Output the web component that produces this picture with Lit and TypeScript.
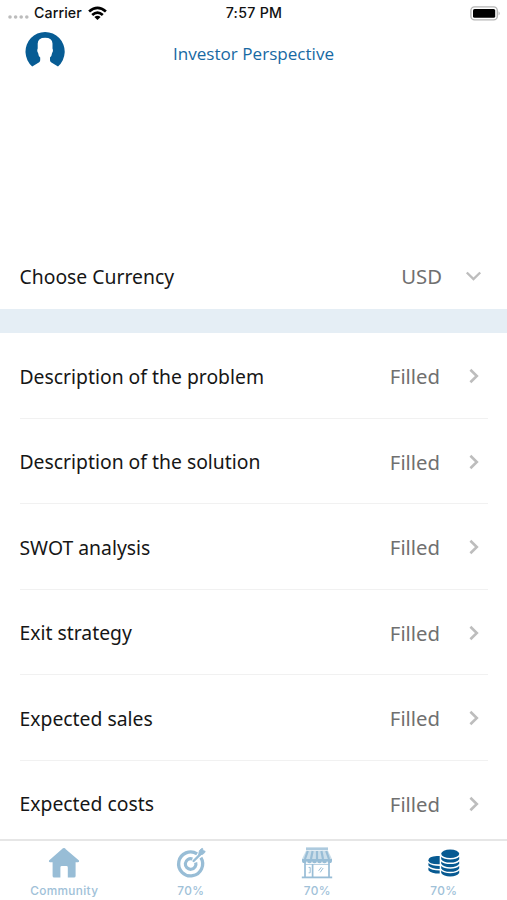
import { LitElement, html, css, svg } from "lit";
import { customElement } from "lit/decorators.js";

const ROWS = [
  "Description of the problem",
  "Description of the solution",
  "SWOT analysis",
  "Exit strategy",
  "Expected sales",
  "Expected costs",
];

const home = svg`<path d="M16 0.8 L31 13.6 Q31.6 15.2 30 15.2 H27.6 V29 Q27.6 30.6 26 30.6 H19.8 V20.4 Q19.8 19 18.4 19 H13.8 Q12.4 19 12.4 20.4 V30.6 H6.2 Q4.6 30.6 4.6 29 V15.2 H2 Q0.4 15.2 1 13.6 L13.8 2.2 Q16 0 18.2 2.2 Z" fill="currentColor"/>`;

const target = svg`<g fill="none" stroke="currentColor">
  <path d="M22.1 6.8 A12 12 0 1 0 25.9 10.7" stroke-width="3.3"/>
  <path d="M17.4 12 A5.3 5.3 0 1 0 20.7 15.4" stroke-width="3.2"/>
  <path d="M18.6 14 L26 6.6" stroke-width="2.4" stroke-linecap="round"/></g>
  <path d="M23.6 7.8 L24.4 3.6 Q27 0.8 27.6 1.4 L28 3.6 L30.2 4.2 Q30.4 5.6 27.6 7.4 Z" fill="currentColor" stroke="currentColor" stroke-width="0.8" stroke-linejoin="round"/>`;

const shop = svg`<g fill="none" stroke="currentColor">
  <rect x="5" y="0.4" width="22" height="2.8" fill="currentColor" stroke="none" opacity="0.8"/>
  <path d="M5 3.8 H27 L31 12 H1 Z" fill="currentColor" stroke="none" opacity="0.5"/>
  <path d="M6.8 4 L4 12 M11.6 4 L10 12 M16 4 V12 M20.4 4 L22 12 M25.2 4 L28 12" stroke-width="2.2"/>
  <path d="M1 12 H31 V13.4 A2.5 2.5 0 0 1 26 13.8 A2.5 2.5 0 0 1 21 13.8 A2.5 2.5 0 0 1 16 13.8 A2.5 2.5 0 0 1 11 13.8 A2.5 2.5 0 0 1 6 13.8 A2.5 2.5 0 0 1 1 13.4 Z" fill="currentColor" stroke="none"/>
  <path d="M4 15 V30 M28 15 V30 M11.6 17 V30" stroke-width="1.7"/>
  <path d="M4 17.4 H28" stroke-width="0.8"/>
  <path d="M0.8 30.4 H31.2" stroke-width="1.8"/>
  <path d="M7.6 20.4 H9.2 V25.8 H7.6 M17.6 23.8 L20.4 20.2 M19.2 25.4 L22.2 21" stroke-width="1"/></g>`;

const coins = svg`<g fill="currentColor">
  <ellipse cx="22.2" cy="6.8" rx="9" ry="4.3"/>
  <path d="M13.2 9.8 Q16 12.5 22.2 12.5 T31.2 9.8 V12.2 Q29 15.6 22.2 15.6 T13.2 12.2 Z"/>
  <path d="M13.2 14.4 Q16 17.1 22.2 17.1 T31.2 14.4 V16.8 Q29 20.2 22.2 20.2 T13.2 16.8 Z"/>
  <path d="M13.2 19 Q16 21.7 22.2 21.7 T31.2 19 V21.4 Q29 24.8 22.2 24.8 T13.2 21.4 Z"/>
  <path d="M13.2 23.6 Q16 26.3 22.2 26.3 T31.2 23.6 V26 Q29 29.4 22.2 29.4 T13.2 26 Z"/>
  <path d="M11.7 8.9 V17.3 Q0.4 17.6 0.4 13.2 Q0.6 9.2 8.8 8.9 Z"/>
  <path d="M0.4 16 Q3.4 18.9 11.7 18.9 V22 Q3 22 0.4 18.6 Z"/>
  <path d="M0.4 20.6 Q3.4 23.5 11.7 23.5 V26.6 Q3 26.6 0.4 23.2 Z"/></g>`;

const TABS = [
  { label: "Community", icon: home, active: false },
  { label: "70%", icon: target, active: false },
  { label: "70%", icon: shop, active: false },
  { label: "70%", icon: coins, active: true },
];

@customElement("app-root")
export class AppRoot extends LitElement {
  static styles = css`
    :host {
      display: flex;
      flex-direction: column;
      width: 507px;
      height: 900px;
      overflow: hidden;
      background: #fff;
      font-family: "Noto Sans", sans-serif;
      color: #161616;
    }
    svg { display: block; flex: none; }
    .status {
      display: grid;
      grid-template-columns: 1fr auto 1fr;
      align-items: center;
      height: 26px;
      padding: 0 7px 0 8px;
      font: 500 14.2px/26px Inter, sans-serif;
      color: #111;
      flex: none;
    }
    .carrier { display: flex; align-items: center; }
    .name { margin: 0 6px 0 5px; letter-spacing: 0.1px; }
    .time { letter-spacing: 0.3px; }
    .battery { justify-self: end; }
    .header {
      display: grid;
      grid-template-columns: 1fr auto 1fr;
      height: 224px;
      padding: 5px 25px 0;
      box-sizing: border-box;
      flex: none;
    }
    .title {
      font: 400 17.1px/24px "Open Sans", sans-serif;
      margin: 11px 0 0;
      color: #1769a3;
    }
    .row {
      display: flex;
      align-items: center;
      box-sizing: border-box;
      height: 85.5px;
      margin: 0 19px 0 19.5px;
      padding: 2px 7px 0 0;
      border-bottom: 1px solid #f1f1f1;
      font-size: 19.35px;
      flex: none;
    }
    .currency { height: 59px; border: 0; padding: 0 6px 7px 0; }
    .label { flex: 1; white-space: nowrap; }
    .value { color: #707070; font-size: 20.3px; margin-right: 27px; }
    .currency .value { margin-right: 23px; }
    .band { height: 24px; background: #e5eef5; flex: none; }
    .list { flex: 1; min-height: 0; overflow: hidden; }
    .tabs {
      display: grid;
      grid-template-columns: repeat(4, 1fr);
      height: 61px;
      box-sizing: border-box;
      border-top: 2px solid #e6e6e6;
      background: #fff;
      padding-left: 1px;
      flex: none;
    }
    .tab {
      display: flex;
      flex-direction: column;
      align-items: center;
      padding-top: 6px;
      color: #98bdd6;
    }
    .caption {
      font: 500 11.8px/16px Inter, sans-serif;
      letter-spacing: 0.35px;
      margin-top: 4px;
      color: #a0c1d8;
    }
    .active { color: #075a92; }
  `;

  render() {
    return html`
      <div class="status">
        <div class="carrier">
          <svg width="21" height="18" viewBox="0 0 21 18" fill="#bcbcbc">
            <circle cx="2" cy="13" r="1.8"/><circle cx="7.6" cy="13" r="1.8"/>
            <circle cx="13.2" cy="13" r="1.8"/><circle cx="18.8" cy="13" r="1.8"/>
          </svg>
          <span class="name">Carrier</span>
          <svg width="19" height="15" viewBox="0 0 19 15" fill="none" stroke="#000" stroke-width="2.7">
            <path d="M1.1 5.6 Q9.5 -2 17.9 5.6"/>
            <path d="M4.2 8.9 Q9.5 4.2 14.8 8.9"/>
            <path d="M9.5 14 L6.4 11.1 Q9.5 8.5 12.6 11.1 Z" fill="#000" stroke="none"/>
          </svg>
        </div>
        <span class="time">7:57 PM</span>
        <svg class="battery" width="30" height="15" viewBox="0 0 30 15">
          <rect x="0.9" y="0.9" width="26.4" height="13" rx="3.6" fill="#fff" stroke="#b5b5b5" stroke-width="1.4"/>
          <rect x="3" y="3" width="22.2" height="8.8" rx="1.6" fill="#000"/>
          <path d="M28.6 5.2 Q30.6 7.4 28.6 9.6 Z" fill="#aaa"/>
        </svg>
      </div>
      <div class="header">
        <svg width="40" height="37" viewBox="0 0 40 37">
          <path fill="#075c94" d="M7.2 35.4 A19.6 19.6 0 1 1 33 35.4 L26 31.2 Q24.8 30.4 25 28.6 V26.6 Q26.8 25 27.1 22 Q28.6 20 27.5 17.6 V12.6 Q27.3 6.8 20.1 6.8 T12.7 12.6 V17.6 Q11.6 20 13.1 22 Q13.4 25 15.2 26.6 V28.6 Q15.4 30.4 14.2 31.2 Z"/>
        </svg>
        <h1 class="title">Investor Perspective</h1>
      </div>
      <div class="row currency">
        <span class="label">Choose Currency</span>
        <span class="value">USD</span>
        <svg width="17" height="16" viewBox="0 0 17 16" fill="none" stroke="#bdbdbd" stroke-width="2.4"><path d="M1.8 4.5 L8.5 11 L15.2 4.5"/></svg>
      </div>
      <div class="band"></div>
      <div class="list">
        ${ROWS.map((label) => html`
          <div class="row">
            <span class="label">${label}</span>
            <span class="value">Filled</span>
            <svg width="14" height="18" viewBox="0 0 14 18" fill="none" stroke="#bdbdbd" stroke-width="2.6"><path d="M3.4 2.8 L9.8 9 L3.4 15.2"/></svg>
          </div>`)}
      </div>
      <div class="tabs">
        ${TABS.map((t) => html`
          <div class="tab ${t.active ? "active" : ""}">
            <svg width="32" height="32" viewBox="0 0 32 32">${t.icon}</svg>
            <span class="caption">${t.label}</span>
          </div>`)}
      </div>
    `;
  }
}
